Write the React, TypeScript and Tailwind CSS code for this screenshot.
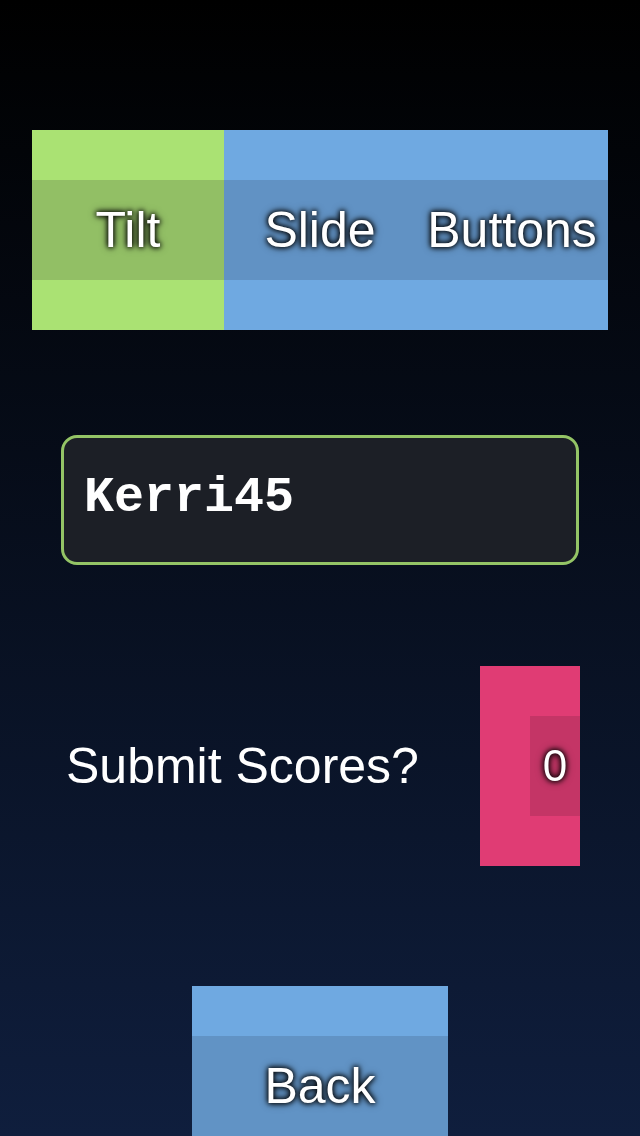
import React from "react";

function Label({ children }: { children: React.ReactNode }) {
  return (
    <span className="[text-shadow:0_0_5px_#000] drop-shadow-[0_0_3px_rgba(0,0,0,0.8)]">{children}</span>
  );
}

export default function App() {
  return (
    <div className="w-[640px] h-[1136px] overflow-hidden bg-[linear-gradient(to_bottom,#000000,#0f1e3d)] flex flex-col font-['Liberation_Sans',Arial,sans-serif] text-white">
      <div className="mt-[130px] ml-[32px] flex h-[200px] w-[576px] shrink-0">
        <div className="w-[192px] h-full bg-[#aae273] flex flex-col justify-center">
          <div className="h-[100px] bg-[#92bf65] flex items-center justify-center text-[50px]">
            <Label>Tilt</Label>
          </div>
        </div>
        <div className="w-[384px] h-full bg-[#6fa9e1] flex flex-col justify-center">
          <div className="h-[100px] bg-[#6192c4] flex text-[50px]">
            <div className="w-[192px] flex items-center justify-center"><Label>Slide</Label></div>
            <div className="w-[192px] flex items-center justify-center"><Label>Buttons</Label></div>
          </div>
        </div>
      </div>

      <div className="mt-[105px] ml-[61px] w-[518px] h-[130px] shrink-0 rounded-[16px] border-[3px] border-[#94c466] bg-[#1c1f26] flex items-center pl-[20px] pb-[4px]">
        <span className="font-['Liberation_Mono','Courier_New',monospace] font-bold text-[50px] leading-none">Kerri45</span>
      </div>

      <div className="mt-[101px] flex h-[200px] shrink-0 items-center">
        <div className="ml-[66px] w-[414px] text-[50px] leading-none">Submit Scores?</div>
        <div className="w-[100px] h-[200px] bg-[#e03c74] flex items-center justify-end">
          <div className="w-[50px] h-[100px] bg-[#c43566] flex items-center justify-center text-[44px]">
            <Label>0</Label>
          </div>
        </div>
      </div>

      <div className="mt-[120px] ml-[192px] w-[256px] h-[200px] shrink-0 bg-[#6fa9e1] flex flex-col justify-center">
        <div className="h-[100px] bg-[#6193c5] flex items-center justify-center text-[50px]">
          <Label>Back</Label>
        </div>
      </div>
    </div>
  );
}
